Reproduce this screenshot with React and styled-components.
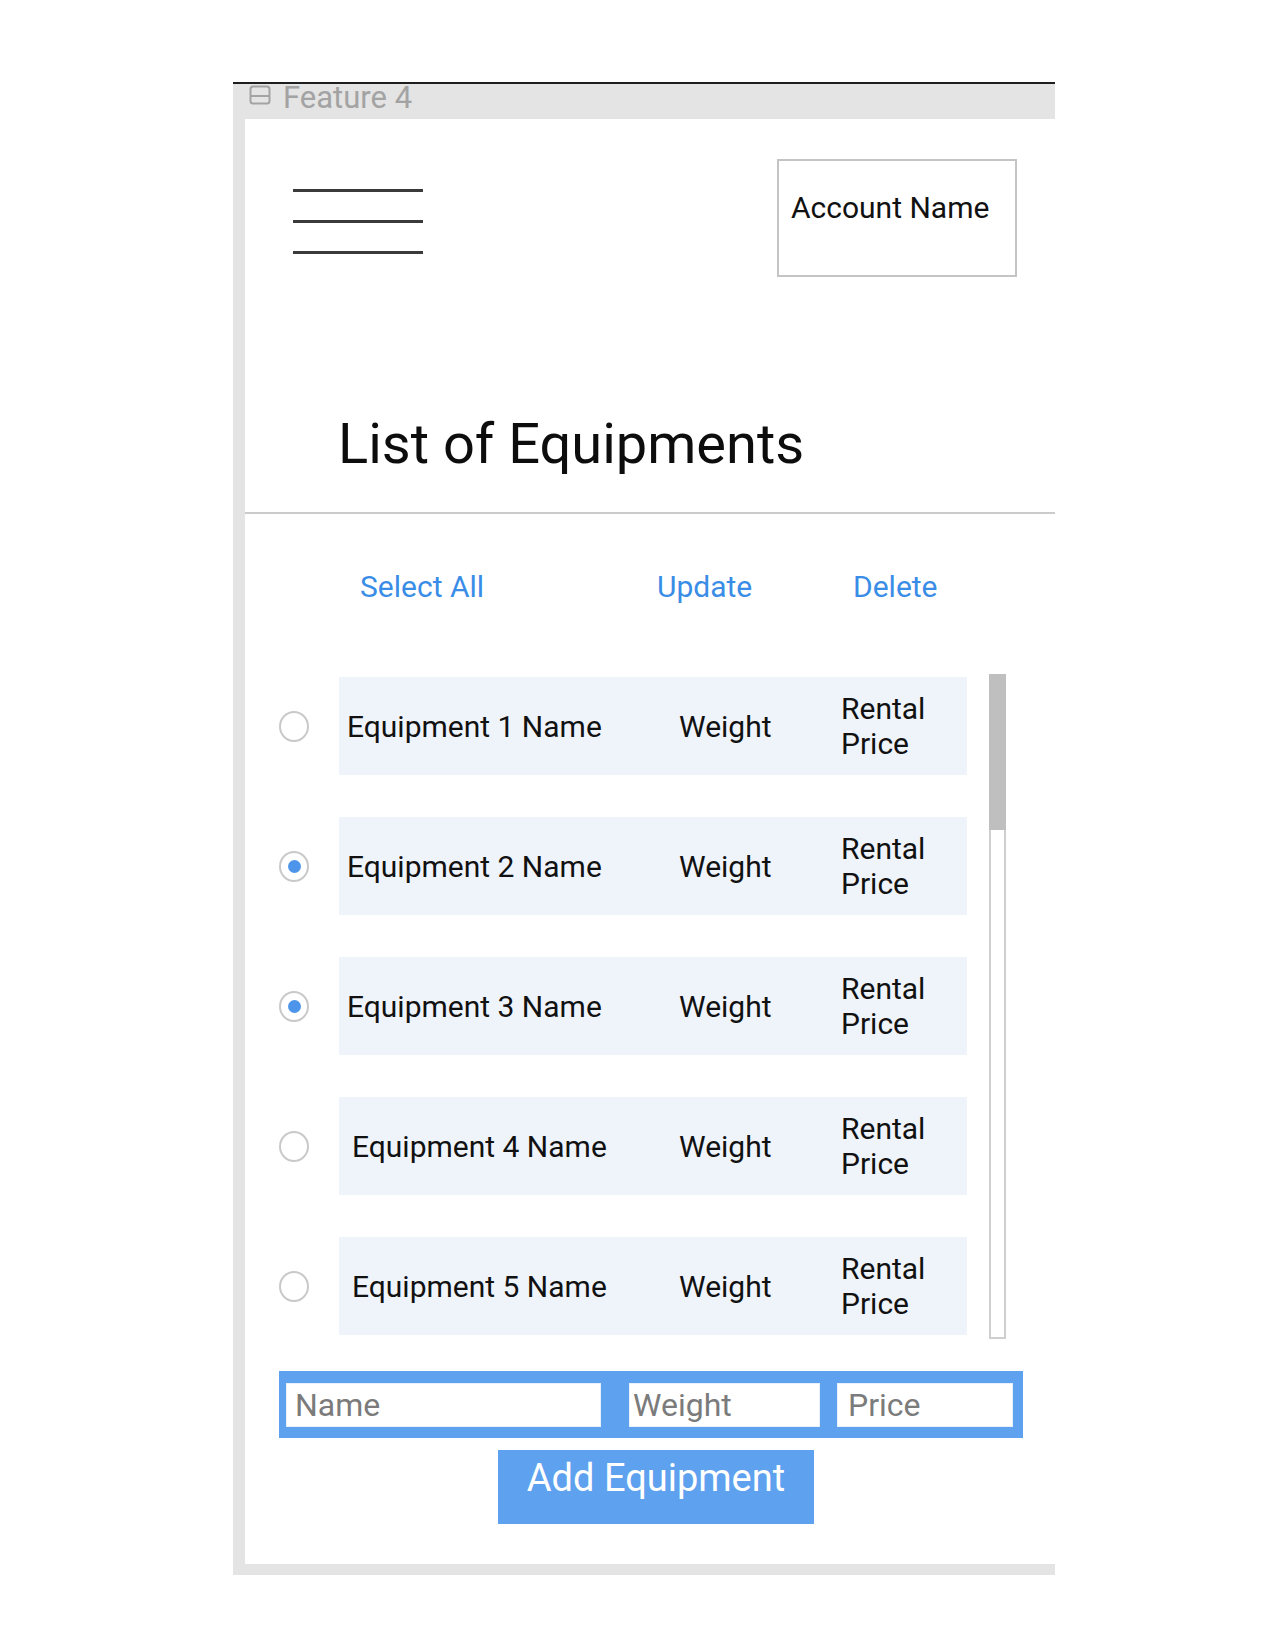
import React from 'react'
import styled, { createGlobalStyle } from 'styled-components'

const GlobalStyle = createGlobalStyle`
  body {
    margin: 0;
    background: #ffffff;
    font-family: 'Roboto', 'Liberation Sans', sans-serif;
    color: #111111;
  }
`

const Page = styled.div`
  padding: 82px 0 0 233px;
`

const Frame = styled.div`
  width: 822px;
  background: #e4e4e4;
  border-top: 2px solid #1e1e1e;
  padding-bottom: 11px;
`

const TitleBar = styled.div`
  height: 35px;
  display: flex;
  align-items: flex-start;
  gap: 12px;
  padding-left: 16px;
`

const TitleIcon = styled.svg`
  width: 22px;
  height: 20px;
  margin-top: 1px;
  flex-shrink: 0;
`

const TitleText = styled.span`
  font-size: 31px;
  line-height: 28px;
  color: #a3a3a3;
`

const Screen = styled.div`
  margin-left: 12px;
  background: #ffffff;
  display: flex;
  flex-direction: column;
  padding-bottom: 40px;
`

const Header = styled.header`
  display: flex;
  justify-content: space-between;
  align-items: flex-start;
  padding: 40px 38px 0 48px;
`

const Hamburger = styled.div`
  width: 130px;
  margin-top: 30px;
  display: flex;
  flex-direction: column;
  gap: 28px;
`

const HamburgerLine = styled.span`
  display: block;
  height: 3px;
  background: #3a3a3a;
`

const AccountBox = styled.div`
  width: 240px;
  height: 118px;
  box-sizing: border-box;
  border: 2px solid #c4c4c4;
  padding: 28px 0 0 12px;
  font-size: 30px;
  line-height: 38px;
  color: #111111;
`

const Title = styled.h1`
  margin: 134px 0 0 93px;
  font-size: 56px;
  line-height: 66px;
  font-weight: 400;
  color: #0d0d0d;
`

const Divider = styled.hr`
  margin: 35px 0 0;
  border: none;
  height: 2px;
  background: #cbcbcb;
`

const Actions = styled.nav`
  margin-top: 55px;
  padding-left: 115px;
  display: grid;
  grid-template-columns: 297px 196px auto;
`

const ActionLink = styled.a`
  font-size: 30px;
  line-height: 36px;
  color: #3a8de6;
  text-decoration: none;
  cursor: pointer;
`

const ListArea = styled.div`
  margin-top: 69px;
  padding-left: 34px;
  display: flex;
  align-items: flex-start;
  gap: 22px;
`

const Rows = styled.div`
  margin-top: 3px;
  width: 688px;
  display: flex;
  flex-direction: column;
  gap: 42px;
`

const Row = styled.div`
  display: flex;
  align-items: center;
  height: 98px;
`

const RadioCell = styled.div`
  width: 60px;
  display: flex;
  align-items: center;
`

const Radio = styled.span`
  width: 30px;
  height: 31px;
  box-sizing: border-box;
  border-radius: 50%;
  border: 2px solid #c9c9c9;
  display: flex;
  align-items: center;
  justify-content: center;
  background: #ffffff;

  &::after {
    content: '';
    width: 13px;
    height: 13px;
    border-radius: 50%;
    background: ${({ $checked }) => ($checked ? '#4d95ea' : 'transparent')};
  }
`

const Card = styled.div`
  flex: 1;
  height: 100%;
  background: #eff4fb;
  display: grid;
  grid-template-columns: ${({ $indent }) => 332 - $indent}px 162px 1fr;
  align-items: center;
  padding-left: ${({ $indent }) => 8 + $indent}px;
  font-size: 30px;
  color: #111111;
`

const Cell = styled.span`
  line-height: 35px;
`

const Scrollbar = styled.div`
  width: 17px;
  height: 665px;
  box-sizing: border-box;
  border: 2px solid #cfcfcf;
  background: #ffffff;
  flex-shrink: 0;
`

const ScrollThumb = styled.div`
  margin: -2px -2px 0;
  height: 156px;
  background: #bfbfbf;
`

const InputBar = styled.form`
  margin: 32px 0 0 34px;
  width: 744px;
  height: 67px;
  box-sizing: border-box;
  background: #5ea1ef;
  padding: 12px 10px 11px 7px;
  display: flex;
  align-items: stretch;
`

const Field = styled.input`
  width: ${({ $width }) => $width}px;
  margin-left: ${({ $gap }) => $gap}px;
  box-sizing: border-box;
  border: 1px solid #e8f0fb;
  background: #ffffff;
  padding: 0 0 0 ${({ $pad }) => $pad}px;
  font-family: 'Roboto', 'Liberation Sans', sans-serif;
  font-size: 32px;
  color: #333333;
  outline: none;

  &::placeholder {
    color: #7b7b7b;
  }
`

const AddButton = styled.button`
  align-self: center;
  margin: 12px 0 0 12px;
  width: 316px;
  height: 74px;
  border: none;
  background: #5ea1ef;
  color: #ffffff;
  font-family: 'Roboto', 'Liberation Sans', sans-serif;
  font-size: 38px;
  line-height: 44px;
  padding: 6px 0 24px;
  cursor: pointer;
`

const equipments = [
  { id: 1, checked: false, indent: 0 },
  { id: 2, checked: true, indent: 0 },
  { id: 3, checked: true, indent: 0 },
  { id: 4, checked: false, indent: 5 },
  { id: 5, checked: false, indent: 5 },
]

const App = () => {
  return (
    <Page>
      <GlobalStyle />
      <Frame>
        <TitleBar>
          <TitleIcon viewBox='0 0 22 20' fill='none'>
            <rect x='1.5' y='1.5' width='19' height='17' rx='2.5' stroke='#a3a3a3' strokeWidth='2' />
            <line x1='2' y1='11' x2='20' y2='11' stroke='#a3a3a3' strokeWidth='2' />
          </TitleIcon>
          <TitleText>Feature 4</TitleText>
        </TitleBar>
        <Screen>
          <Header>
            <Hamburger>
              <HamburgerLine />
              <HamburgerLine />
              <HamburgerLine />
            </Hamburger>
            <AccountBox>Account Name</AccountBox>
          </Header>

          <Title>List of Equipments</Title>
          <Divider />

          <Actions>
            <ActionLink>Select All</ActionLink>
            <ActionLink>Update</ActionLink>
            <ActionLink>Delete</ActionLink>
          </Actions>

          <ListArea>
            <Rows>
              {equipments.map((item) => (
                <Row key={item.id}>
                  <RadioCell>
                    <Radio $checked={item.checked} />
                  </RadioCell>
                  <Card $indent={item.indent}>
                    <Cell>Equipment {item.id} Name</Cell>
                    <Cell>Weight</Cell>
                    <Cell>
                      Rental
                      <br />
                      Price
                    </Cell>
                  </Card>
                </Row>
              ))}
            </Rows>
            <Scrollbar>
              <ScrollThumb />
            </Scrollbar>
          </ListArea>

          <InputBar onSubmit={(e) => e.preventDefault()}>
            <Field $width={315} $gap={0} $pad={8} placeholder='Name' />
            <Field $width={191} $gap={28} $pad={3} placeholder='Weight' />
            <Field $width={176} $gap={17} $pad={10} placeholder='Price' />
          </InputBar>
          <AddButton type='button'>Add Equipment</AddButton>
        </Screen>
      </Frame>
    </Page>
  )
}

export default App
